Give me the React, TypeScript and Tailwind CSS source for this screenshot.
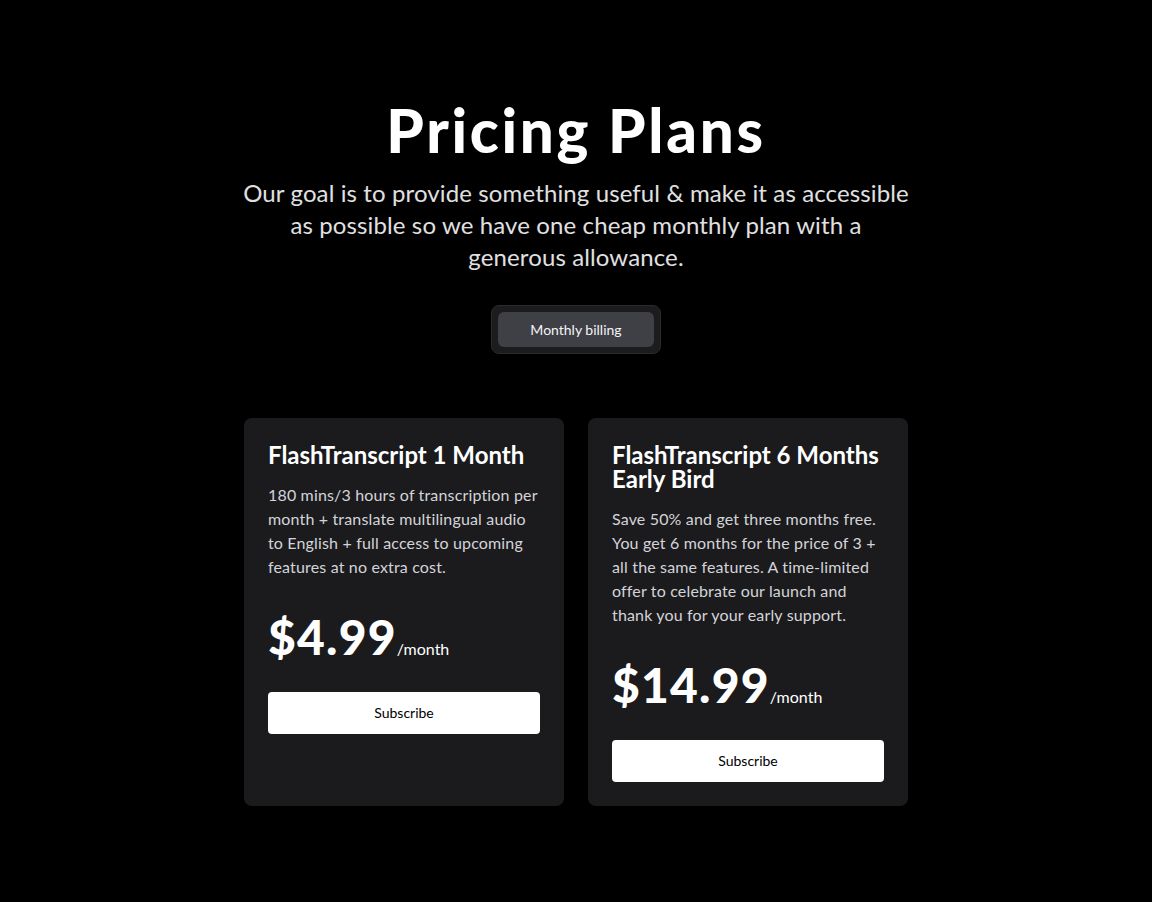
import React from "react";

interface Plan {
  name: string;
  description: string;
  price: string;
}

const plans: Plan[] = [
  {
    name: "FlashTranscript 1 Month",
    description:
      "180 mins/3 hours of transcription per month + translate multilingual audio to English + full access to upcoming features at no extra cost.",
    price: "$4.99",
  },
  {
    name: "FlashTranscript 6 Months Early Bird",
    description:
      "Save 50% and get three months free. You get 6 months for the price of 3 + all the same features. A time-limited offer to celebrate our launch and thank you for your early support.",
    price: "$14.99",
  },
];

const PlanCard: React.FC<{ plan: Plan }> = ({ plan }) => (
  <div className="rounded-lg bg-[#1b1b1e] px-6 pt-[25px] pb-6">
    <h2 className="text-2xl leading-6 font-bold text-white">{plan.name}</h2>
    <p className="mt-4 text-base leading-6 tracking-[0.01em] text-[#d4d4d8]">{plan.description}</p>
    <p className="mt-[34px] flex items-baseline">
      <span className="text-5xl leading-none font-black tracking-[0.025em] text-white">{plan.price}</span>
      <span className="text-base text-white">/month</span>
    </p>
    <button className="mt-[31px] h-[42px] w-full rounded bg-white text-sm text-black">Subscribe</button>
  </div>
);

export default function App() {
  return (
    <div
      className="min-h-screen bg-black pt-[100px] pb-24"
      style={{ fontFamily: 'Lato, "Noto Sans", sans-serif' }}
    >
      {/* Header */}
      <div className="mx-auto max-w-2xl text-center">
        <h1 className="text-6xl leading-none font-black tracking-[0.045em] text-white">Pricing Plans</h1>
        <p className="mt-[17px] text-2xl leading-8 tracking-[0.005em] text-[#e0e0e2]">
          Our goal is to provide something useful &amp; make it as accessible as possible so we have one cheap monthly
          plan with a generous allowance.
        </p>
      </div>

      {/* Billing toggle */}
      <div className="mt-8 flex justify-center">
        <div className="rounded-lg border border-[#2a2a2e] bg-[#1c1c1f] p-1.5">
          <button className="h-[35px] rounded-md bg-[#3f3f46] px-8 text-sm text-[#f4f4f5]">Monthly billing</button>
        </div>
      </div>

      {/* Plans */}
      <div className="mx-auto mt-16 grid w-[664px] grid-cols-2 gap-6">
        {plans.map((plan) => (
          <PlanCard key={plan.name} plan={plan} />
        ))}
      </div>
    </div>
  );
}
